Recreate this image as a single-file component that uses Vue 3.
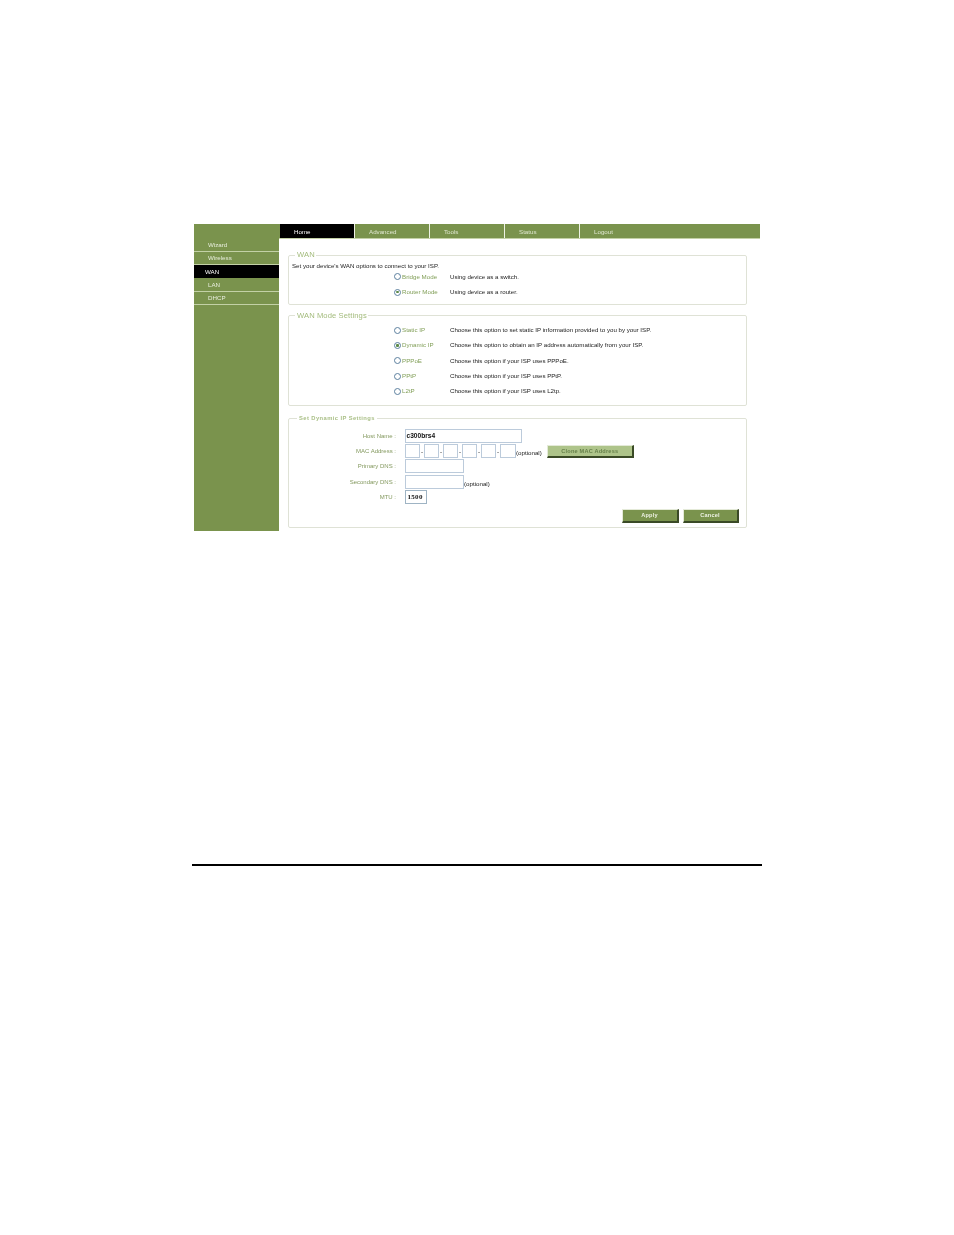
<script setup>
const tabs = ['Home', 'Advanced', 'Tools', 'Status', 'Logout']
const side = ['Wizard', 'Wireless', 'WAN', 'LAN', 'DHCP']
const wanModes = [
  { label: 'Bridge Mode', desc: 'Using device as a switch.', on: false },
  { label: 'Router Mode', desc: 'Using device as a router.', on: true }
]
const ipModes = [
  { label: 'Static IP', desc: 'Choose this option to set static IP information provided to you by your ISP.', on: false },
  { label: 'Dynamic IP', desc: 'Choose this option to obtain an IP address automatically from your ISP.', on: true },
  { label: 'PPPoE', desc: 'Choose this option if your ISP uses PPPoE.', on: false },
  { label: 'PPtP', desc: 'Choose this option if your ISP uses PPtP.', on: false },
  { label: 'L2tP', desc: 'Choose this option if your ISP uses L2tp.', on: false }
]
const macs = [0, 1, 2, 3, 4, 5]
</script>

<template>
  <div class="page">
    <div class="panel">
      <aside class="sidebar">
        <div
          v-for="s in side"
          :key="s"
          class="side-item"
          :class="{ active: s === 'WAN' }"
        >{{ s }}</div>
      </aside>
      <main class="main">
        <nav class="tabs">
          <div
            v-for="t in tabs"
            :key="t"
            class="tab"
            :class="{ active: t === 'Home' }"
          >{{ t }}</div>
        </nav>
        <fieldset class="box box-wan">
          <legend class="legend-big">WAN</legend>
          <p class="intro">Set your device's WAN options to connect to your ISP.</p>
          <div class="mode-list wan-list">
            <div v-for="m in wanModes" :key="m.label" class="mode">
              <span class="radio" :class="{ on: m.on }"></span>
              <span class="mode-label">{{ m.label }}</span>
              <span class="mode-desc">{{ m.desc }}</span>
            </div>
          </div>
        </fieldset>
        <fieldset class="box box-mode">
          <legend class="legend-big">WAN Mode Settings</legend>
          <div class="mode-list ip-list">
            <div v-for="m in ipModes" :key="m.label" class="mode">
              <span class="radio" :class="{ on: m.on }"></span>
              <span class="mode-label">{{ m.label }}</span>
              <span class="mode-desc">{{ m.desc }}</span>
            </div>
          </div>
        </fieldset>
        <fieldset class="box box-ip">
          <legend class="legend-small">Set Dynamic IP Settings</legend>
          <div class="form">
            <div class="row">
              <span class="row-label">Host Name :</span>
              <span class="field host">c300brs4</span>
            </div>
            <div class="row">
              <span class="row-label">MAC Address :</span>
              <div class="macs">
                <template v-for="i in macs" :key="i">
                  <span class="field mac"></span>
                  <span v-if="i < 5" class="dash">-</span>
                </template>
              </div>
              <span class="optional">(optional)</span>
              <button class="btn clone">Clone MAC Address</button>
            </div>
            <div class="row">
              <span class="row-label">Primary DNS :</span>
              <span class="field dns"></span>
            </div>
            <div class="row">
              <span class="row-label">Secondary DNS :</span>
              <span class="field dns"></span>
              <span class="optional">(optional)</span>
            </div>
            <div class="row">
              <span class="row-label">MTU :</span>
              <span class="field mtu">1500</span>
            </div>
          </div>
          <div class="actions">
            <button class="btn action">Apply</button>
            <button class="btn action">Cancel</button>
          </div>
        </fieldset>
      </main>
    </div>
    <div class="rule"></div>
  </div>
</template>

<style>
html, body { background: #fff; }
</style>

<style scoped>
.page {
  height: 1235px;
  box-sizing: border-box;
  padding-top: 224px;
  overflow: hidden;
  font-family: "Liberation Sans", Arial, sans-serif;
  font-size: 6.2px;
  color: #222;
}
.panel {
  display: flex;
  width: 566px;
  height: 307px;
  margin-left: 194px;
  filter: blur(0.22px);
}
.sidebar {
  width: 85px;
  flex: none;
  padding-top: 14.4px;
  background: #7a934d;
  box-sizing: border-box;
}
.side-item {
  height: 13.3px;
  box-sizing: border-box;
  padding: 2.8px 0 0 14px;
  border-bottom: 1px solid #c3d1a6;
  color: #e8eedd;
  line-height: 8px;
}
.side-item.active {
  padding-left: 11px;
  background: #000;
  color: #fff;
  border-bottom-color: #000;
}
.main { flex: 1; min-width: 0; }
.tabs {
  display: flex;
  height: 15px;
  padding-left: 1px;
  background: #7a934d;
  border-bottom: 1px solid #c3d1a6;
  box-sizing: border-box;
}
.tab {
  width: 75px;
  box-sizing: border-box;
  padding-left: 14px;
  border-right: 1px solid #eef2e4;
  color: #dfe7cf;
  line-height: 16px;
}
.tab.active { background: #000; color: #fff; }
.tab:last-child { border-right: 0; }
.box {
  margin: 0 0 0 9px;
  width: 459px;
  box-sizing: border-box;
  padding: 0;
  border: 1px solid #dfe2d6;
  border-radius: 2px;
  min-width: 0;
}
.legend-big {
  margin-left: 6px;
  padding: 0 1px 0 2px;
  color: #a3bb7c;
  font-size: 7.6px;
  line-height: 8px;
  letter-spacing: 0.1px;
}
.legend-small {
  margin-left: 8px;
  padding: 0 2px;
  color: #a9bf86;
  font-size: 5.8px;
  font-weight: bold;
  line-height: 8px;
  letter-spacing: 0.42px;
}
.box-wan { height: 54px; margin-top: 12px; }
.box-mode { height: 94px; margin-top: 6.5px; }
.box-ip { height: 114px; margin-top: 8.5px; }
.intro {
  margin: 3px 0 0 3px;
  line-height: 8px;
  font-size: 6.15px;
}
.mode-list { display: flex; flex-direction: column; }
.wan-list { margin-top: 2.6px; gap: 7.6px; }
.ip-list { margin-top: 6.7px; gap: 7.3px; }
.mode {
  display: flex;
  align-items: center;
  height: 8px;
  padding-left: 105px;
}
.radio {
  position: relative;
  flex: none;
  width: 7px;
  height: 7px;
  border: 1px solid #5b7f9e;
  border-radius: 50%;
  box-sizing: border-box;
  background: #fff;
}
.radio.on::after {
  content: "";
  position: absolute;
  inset: 1.4px;
  border-radius: 50%;
  background: #5c8a48;
}
.mode-label {
  flex: none;
  width: 49px;
  padding-left: 1px;
  box-sizing: border-box;
  color: #83a05a;
  line-height: 8px;
}
.mode-desc { line-height: 8px; white-space: nowrap; font-size: 6.15px; }
.form {
  display: flex;
  flex-direction: column;
  gap: 1.2px;
  margin-top: 7px;
}
.row { display: flex; align-items: center; height: 14px; }
.row-label {
  width: 107px;
  margin-right: 9px;
  text-align: right;
  font-size: 6px;
  color: #84995f;
  flex: none;
}
.field {
  display: block;
  box-sizing: border-box;
  height: 14px;
  flex: none;
  border: 1px solid #bccbdb;
  font-size: 6.6px;
  font-weight: bold;
  line-height: 12px;
  padding-left: 0.5px;
  color: #111;
  background: #fff;
}
.host { width: 117px; }
.dns { width: 59px; }
.mtu { width: 22px; padding-left: 1.5px; font-family: "Liberation Serif", serif; font-size: 7px; letter-spacing: 0.3px; border-color: #9fb4c4; }
.macs { display: flex; align-items: center; }
.mac { width: 15px; padding: 0; }
.mac:last-child { width: 16px; }
.dash { width: 4px; text-align: center; line-height: 16px; height: 14px; }
.optional { margin: 3px 5px 0 0; white-space: nowrap; }
.btn {
  display: block;
  box-sizing: border-box;
  padding: 0;
  border-style: solid;
  border-width: 1px 2px 2px 1px;
  border-color: #e4ead8 #3a4a26 #3a4a26 #e4ead8;
  font-family: "Liberation Sans", Arial, sans-serif;
  font-size: 5.6px;
  font-weight: bold;
  letter-spacing: 0.2px;
}
.clone {
  width: 87px;
  height: 13px;
  background: #aec48a;
  color: #66804a;
}
.actions {
  display: flex;
  justify-content: flex-end;
  gap: 4px;
  margin: 5px 7.5px 0 0;
}
.action {
  width: 57px;
  height: 14px;
  background: #7a934d;
  color: #eef2e4;
}
.action + .action { width: 56px; }
.rule {
  width: 570px;
  height: 1.5px;
  margin: 333px 0 0 192px;
  background: #000;
}
</style>
